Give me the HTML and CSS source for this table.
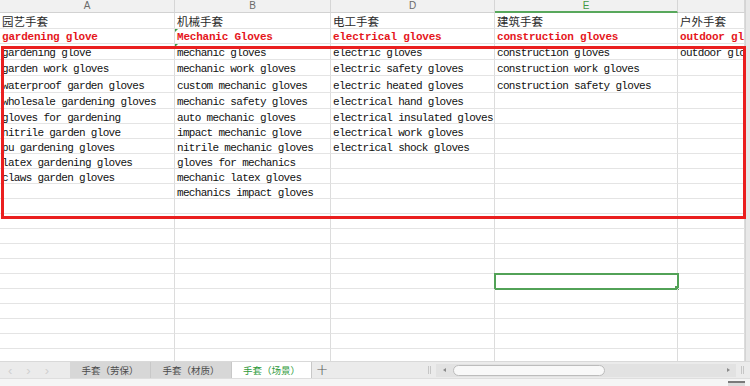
FILE: index.html
```html
<!DOCTYPE html>
<html lang="zh">

<head>
    <meta charset="utf-8">
    <title>手套关键词</title>
    <link rel="stylesheet" href="styles.css">
</head>

<body>
    <div class="app">

        <!-- regneark -->
        <div class="sheet">
            <div class="grid">
                <div class="row colhead">
                    <div class="cell">A</div>
                    <div class="cell">B</div>
                    <div class="cell">D</div>
                    <div class="cell sel">E</div>
                    <div class="cell"></div>
                </div>

                <div class="row tall cn">
                    <div class="cell">园艺手套</div>
                    <div class="cell">机械手套</div>
                    <div class="cell">电工手套</div>
                    <div class="cell">建筑手套</div>
                    <div class="cell">户外手套</div>
                </div>
                <div class="row red">
                    <div class="cell">gardening glove</div>
                    <div class="cell flag">Mechanic Gloves</div>
                    <div class="cell">electrical gloves</div>
                    <div class="cell">construction gloves</div>
                    <div class="cell">outdoor gloves</div>
                </div>
                <div class="row tall">
                    <div class="cell">gardening glove</div>
                    <div class="cell flag">mechanic gloves</div>
                    <div class="cell">electric gloves</div>
                    <div class="cell">construction gloves</div>
                    <div class="cell">outdoor gloves</div>
                </div>
                <div class="row tall">
                    <div class="cell">garden work gloves</div>
                    <div class="cell">mechanic work gloves</div>
                    <div class="cell">electric safety gloves</div>
                    <div class="cell">construction work gloves</div>
                    <div class="cell"></div>
                </div>
                <div class="row taller">
                    <div class="cell">waterproof garden gloves</div>
                    <div class="cell">custom mechanic gloves</div>
                    <div class="cell">electric heated gloves</div>
                    <div class="cell">construction safety gloves</div>
                    <div class="cell"></div>
                </div>
                <div class="row tall">
                    <div class="cell">wholesale gardening gloves</div>
                    <div class="cell">mechanic safety gloves</div>
                    <div class="cell">electrical hand gloves</div>
                    <div class="cell"></div>
                    <div class="cell"></div>
                </div>
                <div class="row">
                    <div class="cell">gloves for gardening</div>
                    <div class="cell">auto mechanic gloves</div>
                    <div class="cell">electrical insulated gloves</div>
                    <div class="cell"></div>
                    <div class="cell"></div>
                </div>
                <div class="row">
                    <div class="cell">nitrile garden glove</div>
                    <div class="cell">impact mechanic glove</div>
                    <div class="cell">electrical work gloves</div>
                    <div class="cell"></div>
                    <div class="cell"></div>
                </div>
                <div class="row">
                    <div class="cell">pu gardening gloves</div>
                    <div class="cell">nitrile mechanic gloves</div>
                    <div class="cell">electrical shock gloves</div>
                    <div class="cell"></div>
                    <div class="cell"></div>
                </div>
                <div class="row">
                    <div class="cell">latex gardening gloves</div>
                    <div class="cell">gloves for mechanics</div>
                    <div class="cell"></div>
                    <div class="cell"></div>
                    <div class="cell"></div>
                </div>
                <div class="row">
                    <div class="cell">claws garden gloves</div>
                    <div class="cell">mechanic latex gloves</div>
                    <div class="cell"></div>
                    <div class="cell"></div>
                    <div class="cell"></div>
                </div>
                <div class="row">
                    <div class="cell"></div>
                    <div class="cell">mechanics impact gloves</div>
                    <div class="cell"></div>
                    <div class="cell"></div>
                    <div class="cell"></div>
                </div>

                <!-- tomme rækker -->
                <div class="row"><div class="cell"></div><div class="cell"></div><div class="cell"></div><div class="cell"></div><div class="cell"></div></div>
                <div class="row"><div class="cell"></div><div class="cell"></div><div class="cell"></div><div class="cell"></div><div class="cell"></div></div>
                <div class="row"><div class="cell"></div><div class="cell"></div><div class="cell"></div><div class="cell"></div><div class="cell"></div></div>
                <div class="row"><div class="cell"></div><div class="cell"></div><div class="cell"></div><div class="cell"></div><div class="cell"></div></div>
                <div class="row"><div class="cell"></div><div class="cell"></div><div class="cell"></div><div class="cell"></div><div class="cell"></div></div>
                <div class="row"><div class="cell"></div><div class="cell"></div><div class="cell"></div><div class="cell active"></div><div class="cell"></div></div>
                <div class="row"><div class="cell"></div><div class="cell"></div><div class="cell"></div><div class="cell"></div><div class="cell"></div></div>
                <div class="row"><div class="cell"></div><div class="cell"></div><div class="cell"></div><div class="cell"></div><div class="cell"></div></div>
                <div class="row"><div class="cell"></div><div class="cell"></div><div class="cell"></div><div class="cell"></div><div class="cell"></div></div>
                <div class="row"><div class="cell"></div><div class="cell"></div><div class="cell"></div><div class="cell"></div><div class="cell"></div></div>
                <div class="row"><div class="cell"></div><div class="cell"></div><div class="cell"></div><div class="cell"></div><div class="cell"></div></div>
            </div>

            <!-- rød ramme om søgeordene -->
            <div class="mark"></div>

            <div class="vscroll"></div>
        </div>

        <!-- faneblade -->
        <div class="tabbar">
            <div class="tabnav">
                <span>‹</span><span>›</span><span>›</span>
            </div>
            <div class="tab">手套（劳保）</div>
            <div class="tab">手套（材质）</div>
            <div class="tab on">手套（场景）</div>
            <div class="addtab">+</div>

            <div class="hscroll">
                <div class="grip"></div>
                <div class="track">
                    <span class="arr left"></span>
                    <div class="thumb"></div>
                    <span class="arr right"></span>
                </div>
                <div class="grip"></div>
            </div>
        </div>

        <div class="statusbar">
            <div class="sbicon"></div>
        </div>

    </div>
</body>

</html>
```

FILE: styles.css
```css
* {
    box-sizing: border-box;
}

body {
    margin: 0;
    width: 750px;
    height: 386px;
    overflow: hidden;
    background: #fff;
    font-family: "Liberation Mono", "Noto Sans CJK SC", monospace;
}

.app {
    display: flex;
    flex-direction: column;
    height: 386px;
}


/*        ************************** REGNEARK **************************/

.sheet {
    position: relative;
    height: 361px;
    display: flex;
    overflow: hidden;
}

.grid {
    flex: 1;
    overflow: hidden;
}

.vscroll {
    width: 5px;
    background: #e8e8e8;
    border-left: 1px solid #d4d4d4;
}

.row {
    display: grid;
    grid-template-columns: 175px 156px 164px 183px 1fr;
    height: 15px;
}

.row.tall {
    height: 16px;
}

.row.taller {
    height: 17px;
}

.cell {
    position: relative;
    display: flex;
    align-items: center;
    padding: 4px 0 0 2px;
    border-right: 1px solid #dcdcdc;
    border-bottom: 1px solid #e4e4e4;
    font-size: 11px;
    letter-spacing: -0.68px;
    line-height: 1;
    color: #111;
    white-space: nowrap;
    overflow: hidden;
}

/* kolonne bogstaver */
.colhead {
    height: 13px;
}

.colhead .cell {
    justify-content: center;
    padding: 0;
    background: #f1f1f1;
    border-right-color: #d6d6d6;
    border-bottom-color: #d2d2d2;
    font-family: "Liberation Sans", sans-serif;
    font-size: 10px;
    letter-spacing: 0;
    color: #6a6a6a;
}

.colhead .cell.sel {
    color: #3f9a45;
    border-bottom: 2px solid #58a85c;
}

.cn .cell {
    padding-top: 3px;
    font-family: "Noto Sans CJK SC", sans-serif;
    font-size: 11.5px;
    letter-spacing: 0;
    color: #2a2a2a;
}

.red .cell {
    padding-top: 2px;
    color: #e5161c;
    font-weight: bold;
    letter-spacing: -0.22px;
}

/* lille grøn trekant i hjørnet */
.cell.flag::before {
    content: "";
    position: absolute;
    left: 0;
    top: 0;
    border-top: 3px solid #3d9b45;
    border-right: 3px solid transparent;
}

.cell.active {
    outline: 2px solid #52a257;
    outline-offset: -1px;
}

.cell.active::after {
    content: "";
    position: absolute;
    right: -1px;
    bottom: -1px;
    width: 3px;
    height: 3px;
    background: #52a257;
}

.mark {
    position: absolute;
    left: 1px;
    top: 46px;
    width: 745px;
    height: 173px;
    border: 3px solid #ea1f1f;
    pointer-events: none;
}


/*        ************************** FANEBLADE **************************/

.tabbar {
    height: 17px;
    display: flex;
    background: #ebebeb;
    border-top: 1px solid #d9d9d9;
    font-family: "Noto Sans CJK SC", sans-serif;
    font-size: 9.5px;
}

.tabnav {
    width: 70px;
    display: flex;
    align-items: center;
    gap: 14px;
    padding-left: 8px;
    font-family: "Liberation Sans", sans-serif;
    font-size: 13px;
    color: #d0d0d0;
}

.tab {
    width: 81px;
    display: flex;
    align-items: center;
    justify-content: center;
    background: #d7d7d7;
    color: #4c4c4c;
    border-right: 1px solid #c8c8c8;
}

.tab.on {
    width: 80px;
    background: #fff;
    color: #2f9a3b;
}

.addtab {
    width: 20px;
    display: flex;
    align-items: center;
    justify-content: center;
    font-family: "DejaVu Sans", sans-serif;
    font-size: 15px;
    font-weight: 300;
    color: #5a5a5a;
}

.hscroll {
    flex: 1;
    display: flex;
    align-items: center;
    padding-left: 96px;
}

.grip {
    width: 3px;
    height: 8px;
    border-left: 1px solid #c6c6c6;
    border-right: 1px solid #c6c6c6;
}

.track {
    width: 300px;
    height: 13px;
    margin: 0 5px;
    display: flex;
    align-items: center;
    background: #e2e2e2;
}

.arr {
    width: 0;
    height: 0;
    border-top: 2px solid transparent;
    border-bottom: 2px solid transparent;
}

.arr.left {
    margin-left: 7px;
    border-right: 3px solid #8a8a8a;
}

.arr.right {
    margin-left: auto;
    margin-right: 6px;
    border-left: 3px solid #8a8a8a;
}

.thumb {
    width: 152px;
    height: 11px;
    margin-left: 7px;
    border: 1px solid #bcbcbc;
    border-radius: 6px;
    background: #f8f8f8;
}

.statusbar {
    flex: 1;
    display: flex;
    justify-content: flex-end;
    padding-right: 5px;
    background: #f5f5f5;
    border-top: 1px solid #dedede;
}

.sbicon {
    width: 17px;
    height: 100%;
    margin-top: 2px;
    background: #dcdcdc;
    border-top: 2px solid #7a7a7a;
}
```
